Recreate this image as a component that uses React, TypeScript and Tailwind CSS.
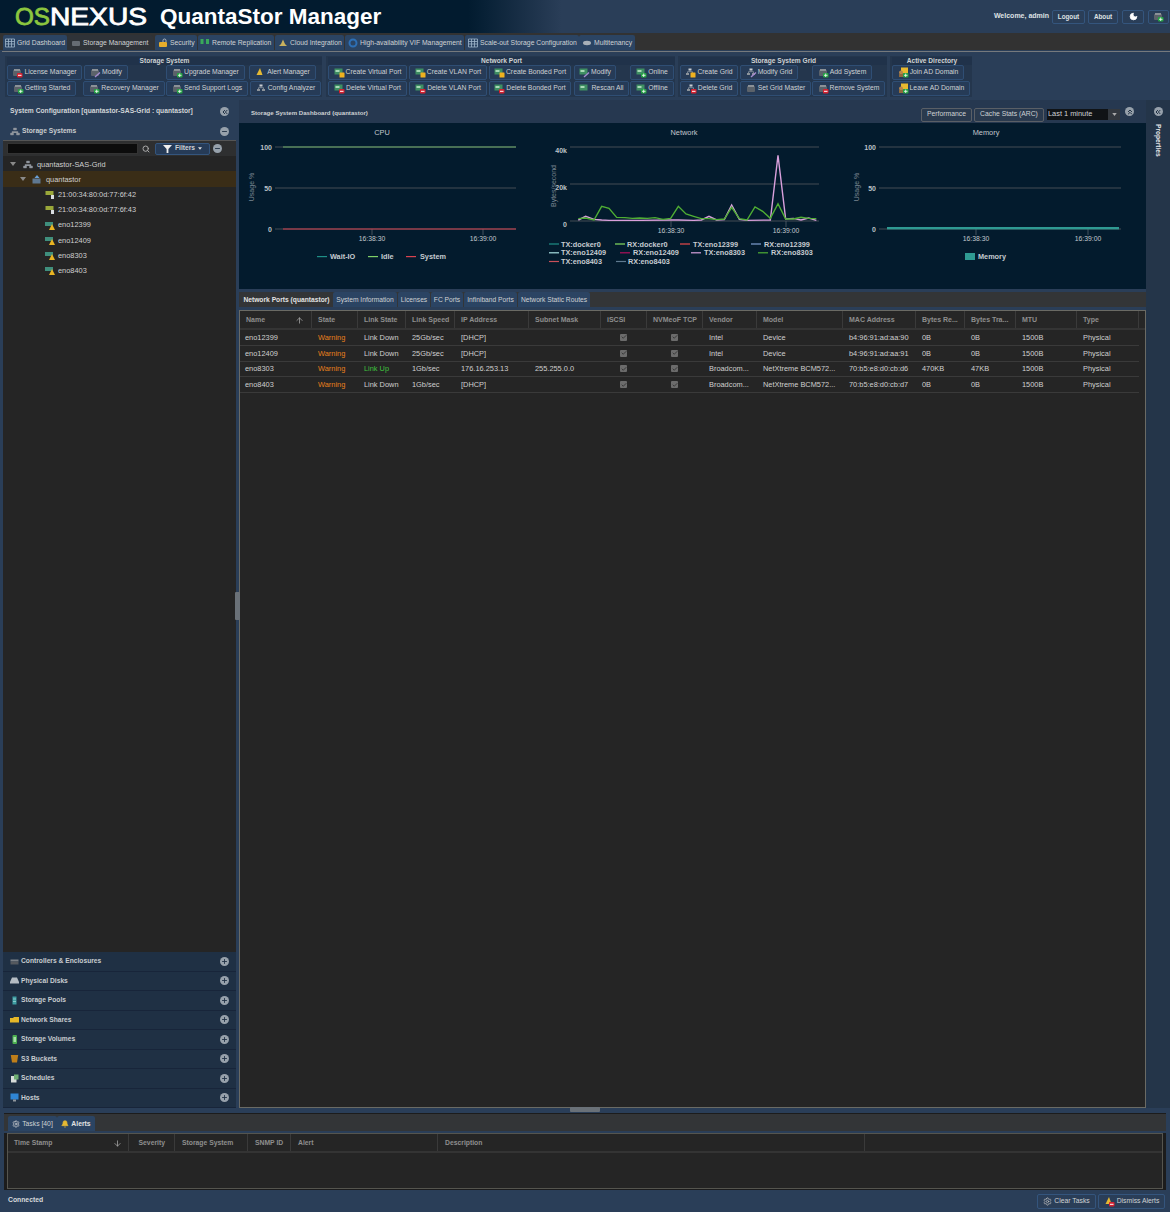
import { ArrowDown, ArrowUp, Bell, Check, ChevronsLeft, ChevronsUp, Minus, Moon, Plus, Search, Settings } from 'lucide-react'
import type { ReactNode } from 'react'

type Base = 'srv' | 'net' | 'tree' | 'ad' | 'bell'
type Badge = 'red' | 'green' | 'yellow' | 'edit' | 'none'

interface Tool {
  label: string
  cls: string
  base: Base
  badge: Badge
}

function ToolIcon({ base, badge }: { base: Base; badge: Badge }) {
  return (
    <svg viewBox="0 0 11 11" className="w-[11px] h-[11px] shrink-0">
      {base === 'srv' && (
        <>
          <rect x="1" y="3" width="8" height="6" rx="1" fill="#5b626a" />
          <rect x="2" y="2" width="6" height="2" fill="#8b9197" />
        </>
      )}
      {base === 'net' && (
        <>
          <rect x="0.5" y="1.5" width="8" height="6" fill="#3f8f63" />
          <rect x="1.5" y="3" width="4" height="2" fill="#a7d9b5" />
        </>
      )}
      {base === 'tree' && (
        <>
          <rect x="3.5" y="1.5" width="3" height="2" fill="#c9ced3" />
          <rect x="1" y="6" width="3" height="2" fill="#8d949b" />
          <rect x="6" y="6" width="3" height="2" fill="#8d949b" />
          <path d="M2.5 6V4.7h5V6M5 3.5v1.2" stroke="#aab0b6" strokeWidth="0.6" fill="none" />
        </>
      )}
      {base === 'ad' && (
        <>
          <rect x="3" y="0.5" width="7" height="6" fill="#e8b92f" />
          <circle cx="3" cy="5.5" r="2" fill="#b8864a" />
          <rect x="1" y="7" width="4" height="3" fill="#8f6a3c" />
        </>
      )}
      {base === 'bell' && <path d="M5 1 7.5 8H1.5Z" fill="#e5b933" />}
      {badge === 'red' && (
        <>
          <rect x="5" y="6" width="5.5" height="4.5" rx="1" fill="#d3202f" />
          <rect x="6" y="7.8" width="3.5" height="1" fill="#fff" />
        </>
      )}
      {badge === 'green' && (
        <>
          <rect x="5" y="6" width="5.5" height="4.5" rx="1" fill="#25a244" />
          <path d="M6 8.3h3.5M7.7 6.6v3.4" stroke="#fff" strokeWidth="0.8" />
        </>
      )}
      {badge === 'yellow' && <rect x="5.5" y="5.5" width="5" height="5" rx="0.5" fill="#efb21f" />}
      {badge === 'edit' && <path d="M5 10 10 5.5" stroke="#a58bd0" strokeWidth="1.4" />}
    </svg>
  )
}

function ToolBtn({ t }: { t: Tool }) {
  return (
    <div className={`h-[15px] shrink-0 flex items-center justify-center gap-[1px] rounded-[2px] border border-[#2f4e74] bg-[#263b57] text-[6.8px] text-[#cfd2d4] whitespace-nowrap ${t.cls}`}>
      <ToolIcon base={t.base} badge={t.badge} />
      <span>{t.label}</span>
    </div>
  )
}

function Group({ title, cls, rows }: { title: string; cls: string; rows: Tool[][] }) {
  return (
    <div className={`h-[41px] shrink-0 bg-[#24364d] pl-[2px] ${cls}`}>
      <div className="h-[8px] mt-[1px] flex items-center justify-center text-[6.6px] font-bold text-[#cfd2d4] bg-[#20324a]">
        {title}
      </div>
      <div className="flex flex-col gap-[1px]">
        {rows.map((r, i) => (
          <div key={i} className="flex">
            {r.map((t) => (
              <ToolBtn key={t.label} t={t} />
            ))}
          </div>
        ))}
      </div>
    </div>
  )
}

const storageRows: Tool[][] = [
  [
    { label: 'License Manager', cls: 'w-[75px]', base: 'srv', badge: 'red' },
    { label: 'Modify', cls: 'w-[44px] ml-[2px]', base: 'srv', badge: 'edit' },
    { label: 'Upgrade Manager', cls: 'w-[79px] ml-[38px]', base: 'srv', badge: 'green' },
    { label: 'Alert Manager', cls: 'w-[67px] ml-[4px]', base: 'bell', badge: 'none' },
  ],
  [
    { label: 'Getting Started', cls: 'w-[69px]', base: 'srv', badge: 'green' },
    { label: 'Recovery Manager', cls: 'w-[82px] ml-[7px]', base: 'srv', badge: 'green' },
    { label: 'Send Support Logs', cls: 'w-[82px] ml-[1px]', base: 'srv', badge: 'green' },
    { label: 'Config Analyzer', cls: 'w-[71px] ml-[2px]', base: 'tree', badge: 'none' },
  ],
]

const networkRows: Tool[][] = [
  [
    { label: 'Create Virtual Port', cls: 'w-[79px]', base: 'net', badge: 'yellow' },
    { label: 'Create VLAN Port', cls: 'w-[78px] ml-[2px]', base: 'net', badge: 'yellow' },
    { label: 'Create Bonded Port', cls: 'w-[82px] ml-[2px]', base: 'net', badge: 'yellow' },
    { label: 'Modify', cls: 'w-[42px] ml-[3px]', base: 'net', badge: 'edit' },
    { label: 'Online', cls: 'w-[44px] ml-[14px]', base: 'net', badge: 'green' },
  ],
  [
    { label: 'Delete Virtual Port', cls: 'w-[79px]', base: 'net', badge: 'red' },
    { label: 'Delete VLAN Port', cls: 'w-[78px] ml-[2px]', base: 'net', badge: 'red' },
    { label: 'Delete Bonded Port', cls: 'w-[82px] ml-[2px]', base: 'net', badge: 'red' },
    { label: 'Rescan All', cls: 'w-[55px] ml-[3px]', base: 'net', badge: 'none' },
    { label: 'Offline', cls: 'w-[44px] ml-[1px]', base: 'net', badge: 'green' },
  ],
]

const gridRows: Tool[][] = [
  [
    { label: 'Create Grid', cls: 'w-[58px]', base: 'tree', badge: 'yellow' },
    { label: 'Modify Grid', cls: 'w-[58px] ml-[2px]', base: 'tree', badge: 'edit' },
    { label: 'Add System', cls: 'w-[60px] ml-[14px]', base: 'srv', badge: 'green' },
  ],
  [
    { label: 'Delete Grid', cls: 'w-[58px]', base: 'tree', badge: 'red' },
    { label: 'Set Grid Master', cls: 'w-[71px] ml-[2px]', base: 'srv', badge: 'none' },
    { label: 'Remove System', cls: 'w-[73px] ml-[1px]', base: 'srv', badge: 'red' },
  ],
]

const adRows: Tool[][] = [
  [{ label: 'Join AD Domain', cls: 'w-[72px]', base: 'ad', badge: 'green' }],
  [{ label: 'Leave AD Domain', cls: 'w-[78px]', base: 'ad', badge: 'green' }],
]

function Round({ children, cls = '' }: { children: ReactNode; cls?: string }) {
  return (
    <span className={`w-[9px] h-[9px] shrink-0 rounded-full bg-[#97a1ab] text-[#1f3044] flex items-center justify-center ${cls}`}>
      {children}
    </span>
  )
}

function TabIcon({ kind }: { kind: string }) {
  return (
    <svg viewBox="0 0 10 10" className="w-[10px] h-[10px] shrink-0">
      {kind === 'grid' && (
        <path d="M.5 1h9v8h-9zM.5 3.5h9M.5 6h9M3.5 1v8M6.5 1v8" fill="none" stroke="#9fb6cc" strokeWidth="0.8" />
      )}
      {kind === 'box' && <rect x="1" y="3" width="8" height="5" rx="1" fill="#666c73" />}
      {kind === 'lock' && (
        <>
          <path d="M5 4V2.5a1.5 1.5 0 0 1 3 0V4" fill="none" stroke="#c9ccce" strokeWidth="0.8" />
          <rect x="1" y="4" width="8" height="5" rx="1" fill="#e4ac2c" />
        </>
      )}
      {kind === 'pair' && (
        <>
          <rect x="0.5" y="1" width="3" height="5" fill="#39a85b" />
          <rect x="6" y="1" width="3" height="5" fill="#39a85b" />
        </>
      )}
      {kind === 'cloud' && <path d="M1 8h8L7 6 5 1.5 3 6Z" fill="#c9b25e" />}
      {kind === 'ring' && <circle cx="5" cy="5" r="3.5" fill="none" stroke="#2d6fb5" strokeWidth="2" />}
      {kind === 'mt' && <ellipse cx="5" cy="5" rx="4" ry="2.2" fill="#a8b0b8" />}
    </svg>
  )
}

const mainTabs = [
  { label: 'Grid Dashboard', cls: 'w-[64px] pl-[2px] bg-[#2b4463]', icon: 'grid' },
  { label: 'Storage Management', cls: 'w-[86px] pl-[4px] bg-[#2f3338]', icon: 'box' },
  { label: 'Security', cls: 'w-[42px] pl-[3px] ml-[2px] bg-[#2b4463]', icon: 'lock' },
  { label: 'Remote Replication', cls: 'w-[76px] pl-[2px] ml-[1px] bg-[#2b4463]', icon: 'pair' },
  { label: 'Cloud Integration', cls: 'w-[69px] pl-[3px] ml-[1px] bg-[#2b4463]', icon: 'cloud' },
  { label: 'High-availability VIF Management', cls: 'w-[119px] pl-[3px] ml-[1px] bg-[#2b4463]', icon: 'ring' },
  { label: 'Scale-out Storage Configuration', cls: 'w-[114px] pl-[3px] ml-[1px] bg-[#2b4463]', icon: 'grid' },
  { label: 'Multitenancy', cls: 'w-[56px] pl-[3px] bg-[#2b4463]', icon: 'mt' },
]

function TreeIcon({ kind }: { kind: 'tree' | 'host' | 'fc' | 'port' }) {
  return (
    <svg viewBox="0 0 10 9" className="w-[10px] h-[9px] shrink-0">
      {kind === 'tree' && (
        <path d="M3.5 1h3v2h-3zM.5 6h3v2h-3zM6.5 6h3v2h-3zM2 6V4.5h6V6" fill="#8f969d" stroke="#8f969d" strokeWidth="0.4" />
      )}
      {kind === 'host' && (
        <>
          <rect x="0.5" y="3.5" width="8" height="5" fill="#5f7891" />
          <path d="M5 0 7.5 3h-5Z" fill="#6aa0d6" />
        </>
      )}
      {kind === 'fc' && (
        <>
          <rect x="0.5" y="1" width="8" height="4" fill="#9aa83a" />
          <rect x="6" y="5" width="3" height="4" fill="#d8dde0" />
        </>
      )}
      {kind === 'port' && (
        <>
          <rect x="0" y="1" width="8" height="4" fill="#3f8f7d" />
          <path d="M7 3 10 9H4Z" fill="#e8b422" />
        </>
      )}
    </svg>
  )
}

const treeLeaves: { label: string; kind: 'fc' | 'port' }[] = [
  { label: '21:00:34:80:0d:77:6f:42', kind: 'fc' },
  { label: '21:00:34:80:0d:77:6f:43', kind: 'fc' },
  { label: 'eno12399', kind: 'port' },
  { label: 'eno12409', kind: 'port' },
  { label: 'eno8303', kind: 'port' },
  { label: 'eno8403', kind: 'port' },
]

function SectionIcon({ kind }: { kind: string }) {
  return (
    <svg viewBox="0 0 9 9" className="w-[9px] h-[9px] mr-[2px] shrink-0">
      {kind === 'ctrl' && (
        <>
          <rect x="0.5" y="2.5" width="8" height="2" fill="#7b8086" />
          <rect x="0.5" y="4.5" width="8" height="3" fill="#55595e" />
        </>
      )}
      {kind === 'disk' && <path d="M2 1.5h5l2 4.5H0ZM0 6h9v1.5H0Z" fill="#b5bcc3" />}
      {kind === 'pool' && (
        <>
          <rect x="2.5" y="0.5" width="4" height="8" fill="#3f9ea3" />
          <path d="M3 3h3M3 5.5h3" stroke="#a9dcdc" strokeWidth="0.7" />
        </>
      )}
      {kind === 'share' && <path d="M0 3h3l1-1h5v5.5H0Z" fill="#e5b728" />}
      {kind === 'vol' && (
        <>
          <rect x="2.5" y="0" width="4.5" height="9" rx="1" fill="#4caf50" />
          <rect x="3.5" y="2" width="2.5" height="5" fill="#a7e0a9" />
        </>
      )}
      {kind === 'bucket' && <path d="M.8 1h7.4L7 8.5H2Z" fill="#c07f1a" />}
      {kind === 'sched' && (
        <>
          <rect x="1" y="2" width="5.5" height="6.5" fill="#d7dcd9" />
          <rect x="4" y="0.5" width="4.5" height="5" fill="#6fae72" />
        </>
      )}
      {kind === 'host' && (
        <>
          <rect x="0.5" y="0.5" width="8" height="6" fill="#2f86d6" />
          <rect x="3" y="6.5" width="3" height="2" fill="#8f969d" />
        </>
      )}
    </svg>
  )
}

const sections = [
  { label: 'Controllers & Enclosures', icon: 'ctrl' },
  { label: 'Physical Disks', icon: 'disk' },
  { label: 'Storage Pools', icon: 'pool' },
  { label: 'Network Shares', icon: 'share' },
  { label: 'Storage Volumes', icon: 'vol' },
  { label: 'S3 Buckets', icon: 'bucket' },
  { label: 'Schedules', icon: 'sched' },
  { label: 'Hosts', icon: 'host' },
]

const columns = [
  { label: 'Name', cls: 'w-[72px]' },
  { label: 'State', cls: 'w-[46px]' },
  { label: 'Link State', cls: 'w-[48px]' },
  { label: 'Link Speed', cls: 'w-[49px]' },
  { label: 'IP Address', cls: 'w-[74px]' },
  { label: 'Subnet Mask', cls: 'w-[72px]' },
  { label: 'iSCSI', cls: 'w-[46px]' },
  { label: 'NVMeoF TCP', cls: 'w-[56px]' },
  { label: 'Vendor', cls: 'w-[54px]' },
  { label: 'Model', cls: 'w-[86px]' },
  { label: 'MAC Address', cls: 'w-[73px]' },
  { label: 'Bytes Re...', cls: 'w-[49px]' },
  { label: 'Bytes Tra...', cls: 'w-[51px]' },
  { label: 'MTU', cls: 'w-[61px]' },
  { label: 'Type', cls: 'w-[62px]' },
]

const ports = [
  ['eno12399', 'Warning', 'Link Down', '25Gb/sec', '[DHCP]', '', '', '', 'Intel', 'Device', 'b4:96:91:ad:aa:90', '0B', '0B', '1500B', 'Physical'],
  ['eno12409', 'Warning', 'Link Down', '25Gb/sec', '[DHCP]', '', '', '', 'Intel', 'Device', 'b4:96:91:ad:aa:91', '0B', '0B', '1500B', 'Physical'],
  ['eno8303', 'Warning', 'Link Up', '1Gb/sec', '176.16.253.13', '255.255.0.0', '', '', 'Broadcom...', 'NetXtreme BCM572...', '70:b5:e8:d0:cb:d6', '470KB', '47KB', '1500B', 'Physical'],
  ['eno8403', 'Warning', 'Link Down', '1Gb/sec', '[DHCP]', '', '', '', 'Broadcom...', 'NetXtreme BCM572...', '70:b5:e8:d0:cb:d7', '0B', '0B', '1500B', 'Physical'],
]

const subTabs = [
  { label: 'Network Ports (quantastor)', cls: 'w-[93px] bg-[#333537] font-bold text-[#e2e2e2]' },
  { label: 'System Information', cls: 'w-[64px] bg-[#2b4463]' },
  { label: 'Licenses', cls: 'w-[32px] ml-[1px] bg-[#2b4463]' },
  { label: 'FC Ports', cls: 'w-[32px] ml-[1px] bg-[#2b4463]' },
  { label: 'Infiniband Ports', cls: 'w-[53px] ml-[1px] bg-[#2b4463]' },
  { label: 'Network Static Routes', cls: 'w-[72px] ml-[1px] bg-[#2b4463]' },
]

const alertCols = [
  { label: 'Time Stamp', cls: 'w-[121px]' },
  { label: 'Severity', cls: 'w-[46px] justify-end pr-[9px]' },
  { label: 'Storage System', cls: 'w-[73px] pl-[7px]' },
  { label: 'SNMP ID', cls: 'w-[43px] pl-[7px]' },
  { label: 'Alert', cls: 'w-[147px] pl-[7px]' },
  { label: 'Description', cls: 'w-[427px] pl-[7px]' },
]

// reference coordinates of the network lines, as read from the picture
const green = [[118, 296], [140, 294], [165, 300], [188, 259], [210, 265], [233, 292], [258, 293], [280, 295], [302, 294], [325, 295], [348, 293], [372, 298], [395, 295], [418, 259], [441, 282], [464, 289], [487, 296], [510, 296], [533, 299], [556, 297], [578, 262], [601, 296], [624, 300], [648, 261], [671, 274], [694, 295], [717, 251], [740, 297], [763, 297], [786, 292], [809, 295], [832, 296]]
const pink = [[118, 300], [140, 289], [165, 298], [188, 300], [210, 301], [233, 301], [302, 301], [395, 300], [418, 300], [464, 301], [487, 300], [510, 289], [533, 300], [556, 299], [578, 255], [601, 298], [624, 301], [694, 300], [717, 106], [740, 297], [763, 295], [786, 300], [809, 294], [832, 301]]
const toPts = (a: number[][]) => a.map(([x, y]) => `${540 + x / 3},${120 + y / 3}`).join(' ')

const svgText = { fontFamily: 'Liberation Sans, sans-serif' }

function Axis({ x1, x2, ys, labels, ticks, title, titleX, yTitle, yTitleX, yTitleY, labelX, labelDy = 0.5 }: {
  x1: number
  x2: number
  ys: number[]
  labels: string[]
  ticks: number[]
  title: string
  titleX: number
  yTitle: string
  yTitleX: number
  yTitleY: number
  labelX: number
  labelDy?: number
}) {
  const base = ys[ys.length - 1]
  return (
    <g style={svgText}>
      <text x={titleX} y="134.5" fontSize="7.4" fill="#c2c8cd" textAnchor="middle">{title}</text>
      {ys.map((y, i) => (
        <g key={y}>
          <line x1={x1} x2={x2} y1={y} y2={y} stroke="#444d55" strokeWidth="1" />
          <text x={labelX} y={y + 2.6 + labelDy} fontSize="7" fontWeight="700" fill="#bdc2c7" textAnchor="end">{labels[i]}</text>
        </g>
      ))}
      {ticks.map((t, i) => (
        <g key={t}>
          <line x1={t} x2={t} y1={base} y2={base + 6} stroke="#566069" strokeWidth="0.8" />
          <text x={t} y={base + 11.5} fontSize="6.8" fill="#c2c8cd" textAnchor="middle">{i === 0 ? '16:38:30' : '16:39:00'}</text>
        </g>
      ))}
      <text transform={`translate(${yTitleX} ${yTitleY}) rotate(-90)`} fontSize="7" fill="#7a8691" textAnchor="middle">{yTitle}</text>
    </g>
  )
}

function LegendItem({ x, y, color, label, gap = 12 }: { x: number; y: number; color: string; label: string; gap?: number }) {
  return (
    <g style={svgText}>
      <line x1={x} x2={x + 10} y1={y} y2={y} stroke={color} strokeWidth="1.2" />
      <text x={x + gap} y={y + 2.6} fontSize="7.3" fontWeight="700" fill="#c6cbd1">{label}</text>
    </g>
  )
}

function Charts() {
  return (
    <div className="h-[166px] flex bg-[#031b2d]">
      <svg viewBox="240 123 301 166" className="w-[301px] h-[166px] shrink-0">
        <Axis x1={276} x2={517} ys={[147, 188, 229]} labels={['100', '50', '0']} ticks={[373, 484]} title="CPU" titleX={383} yTitle="Usage %" yTitleX={255} yTitleY={187} labelX={273} />
        <line x1={284} x2={517} y1={147} y2={147} stroke="#6fae6a" strokeWidth="1.2" />
        <line x1={284} x2={517} y1={229} y2={229} stroke="#d0414f" strokeWidth="1.2" />
        <LegendItem x={318} y={256.6} color="#1f8f86" label="Wait-IO" gap={13} />
        <LegendItem x={369} y={256.6} color="#7fd067" label="Idle" gap={13} />
        <LegendItem x={407} y={256.6} color="#d9434f" label="System" gap={14} />
      </svg>
      <svg viewBox="541 123 301 166" className="w-[301px] h-[166px] shrink-0">
        <Axis x1={571} x2={820} ys={[147, 184, 221]} labels={['40k', '20k', '0']} ticks={[672, 787]} title="Network" titleX={685} yTitle="Bytes/second" yTitleX={557} yTitleY={186} labelX={568} labelDy={3} />
        <polyline points={toPts(pink)} fill="none" stroke="#d9a0dc" strokeWidth="1.4" />
        <polyline points={toPts(green)} fill="none" stroke="#4fae34" strokeWidth="1.4" />
        <LegendItem x={550} y={244} color="#1f8f86" label="TX:docker0" />
        <LegendItem x={616} y={244} color="#86e05f" label="RX:docker0" />
        <LegendItem x={681} y={244} color="#ea4a4a" label="TX:eno12399" gap={13} />
        <LegendItem x={752} y={244} color="#7fa0d0" label="RX:eno12399" gap={13} />
        <LegendItem x={550} y={252.8} color="#a8dfe0" label="TX:eno12409" />
        <LegendItem x={621} y={252.8} color="#b0105a" label="RX:eno12409" gap={13} />
        <LegendItem x={692} y={252.8} color="#d9a0dc" label="TX:eno8303" gap={13} />
        <LegendItem x={759} y={252.8} color="#4fae34" label="RX:eno8303" gap={13} />
        <LegendItem x={550} y={261.5} color="#c9505a" label="TX:eno8403" />
        <LegendItem x={617} y={261.5} color="#5f7a90" label="RX:eno8403" />
      </svg>
      <svg viewBox="842 123 305 166" className="w-[305px] h-[166px] shrink-0">
        <Axis x1={880} x2={1122} ys={[147, 188, 229]} labels={['100', '50', '0']} ticks={[977, 1089]} title="Memory" titleX={987} yTitle="Usage %" yTitleX={860} yTitleY={187} labelX={877} />
        <rect x={888} y={227} width={232} height={2.4} fill="#2f9a92" />
        <rect x={966} y={253} width={10} height={7} fill="#2f9a92" />
        <text x={979} y={259.2} fontSize="7.3" fontWeight="700" fill="#c6cbd1" style={svgText}>Memory</text>
      </svg>
    </div>
  )
}

function Checkbox() {
  return (
    <span className="w-[7px] h-[7px] rounded-[1px] bg-[#6b6b6b] flex items-center justify-center">
      <Check size={6} strokeWidth={3} className="text-[#2a2a2a]" />
    </span>
  )
}

function cellClass(i: number, v: string) {
  if (i === 6 || i === 7) return 'justify-center pr-[1px]'
  if (i === 0) return 'pl-[5px] text-[#d0d0d0]'
  if (i === 1) return 'pl-[6px] text-[#e8801c]'
  if (v === 'Link Up') return 'pl-[6px] text-[#3fc23f]'
  return 'pl-[6px] text-[#d0d0d0]'
}

export default function App() {
  return (
    <div className="w-[1170px] h-[1212px] overflow-hidden relative flex flex-col bg-[#2a3e58] font-['Liberation_Sans',Arial,sans-serif] text-[#cfd2d4]">
      {/* header */}
      <div className="h-[33px] shrink-0 flex items-center bg-gradient-to-r from-[#021b2f] from-40% to-[#2a3e58] to-[48%]">
        <svg viewBox="0 0 150 33" className="w-[150px] h-[33px] shrink-0">
          <text x="15" y="25" fontSize="24.5" fill="#8cc63f" stroke="#8cc63f" strokeWidth="0.8" textLength="35" lengthAdjust="spacingAndGlyphs" fontFamily="Liberation Sans, sans-serif">OS</text>
          <text x="50" y="25" fontSize="24.5" fill="#ffffff" stroke="#ffffff" strokeWidth="0.8" textLength="97" lengthAdjust="spacingAndGlyphs" fontFamily="Liberation Sans, sans-serif">NEXUS</text>
        </svg>
        <span className="ml-[10px] text-[22.5px] font-bold text-white whitespace-nowrap">QuantaStor Manager</span>
        <div className="ml-auto flex items-center text-[6.3px] font-bold text-[#dfe2e4]">
          <span className="mr-[3px] text-[7px]">Welcome, admin</span>
          <div className="w-[33px] h-[14px] flex items-center justify-center border border-[#34557d] rounded-[2px]">Logout</div>
          <div className="w-[30px] h-[14px] ml-[3px] flex items-center justify-center border border-[#34557d] rounded-[2px]">About</div>
          <div className="w-[22px] h-[14px] ml-[4px] flex items-center justify-center border border-[#34557d] rounded-[2px]">
            <Moon size={9} className="text-white" fill="#ffffff" />
          </div>
          <div className="w-[21px] h-[14px] ml-[4px] mr-[1px] flex items-center justify-center border border-[#34557d] rounded-[2px]">
            <ToolIcon base="srv" badge="green" />
          </div>
        </div>
      </div>

      {/* main tabs */}
      <div className="h-[17px] shrink-0 flex items-end pl-[3px] bg-[#323232]">
        {mainTabs.map((t) => (
          <div key={t.label} className={`h-[15px] shrink-0 flex items-center gap-[2px] pt-[1px] rounded-t-[2px] text-[6.8px] text-[#cfd2d4] whitespace-nowrap ${t.cls}`}>
            <TabIcon kind={t.icon} />
            <span>{t.label}</span>
          </div>
        ))}
      </div>

      {/* toolbar */}
      <div className="h-[50px] shrink-0 pt-[1px]">
        <div className="h-[1px] ml-[2px] bg-[#75797d]" />
        <div className="flex pl-[5px] pt-[4px]">
          <Group title="Storage System" cls="w-[317px]" rows={storageRows} />
          <Group title="Network Port" cls="w-[349px] ml-[4px]" rows={networkRows} />
          <Group title="Storage System Grid" cls="w-[209px] ml-[3px]" rows={gridRows} />
          <Group title="Active Directory" cls="w-[82px] ml-[3px]" rows={adRows} />
        </div>
      </div>

      {/* body */}
      <div className="h-[1010px] shrink-0 flex relative pb-[2px]">
        {/* left panel */}
        <div className="w-[239px] shrink-0 flex flex-col pl-[3px] pr-[3px]">
          <div className="h-[23px] shrink-0 flex items-center pl-[7px] pr-[7px] text-[6.7px] font-bold text-[#d2d5d7] justify-between">
            <span>System Configuration [quantastor-SAS-Grid : quantastor]</span>
            <Round><ChevronsLeft size={8} strokeWidth={3} /></Round>
          </div>
          <div className="h-[17px] shrink-0 flex items-center pl-[7px] pr-[7px] text-[6.7px] font-bold text-[#c9ccce] gap-[2px]">
            <TreeIcon kind="tree" />
            <span>Storage Systems</span>
            <Round cls="ml-auto"><Minus size={7} strokeWidth={3} /></Round>
          </div>
          <div className="h-[16px] shrink-0 flex items-center bg-[#2e2f30] border-t border-[#555] pl-[4px]">
            <div className="w-[131px] h-[11px] bg-[#0c0c0c] border border-[#333]" />
            <Search size={8} className="ml-[4px] text-[#aaa]" strokeWidth={3} />
            <div className="w-[55px] h-[12px] ml-[5px] flex items-center justify-center gap-[3px] rounded-[2px] border border-[#34557d] bg-[#263b57] text-[6.7px] font-bold">
              <svg viewBox="0 0 10 10" className="w-[9px] h-[9px]"><path d="M0 1h10L6 5.5V10H4V5.5Z" fill="#eee" /></svg>
              <span>Filters</span>
              <svg viewBox="0 0 6 4" className="w-[4px] h-[3px]"><path d="M0 0h6L3 4Z" fill="#ddd" /></svg>
            </div>
            <Round cls="ml-[3px]"><Minus size={7} strokeWidth={3} /></Round>
          </div>
          <div className="flex-1 bg-[#252525] text-[7.4px] text-[#d0d0d0]">
            <div className="h-[15.4px] flex items-center pl-[7px] pt-[1px]">
              <svg viewBox="0 0 6 4" className="w-[6px] h-[4px]"><path d="M0 0h6L3 4Z" fill="#8a8a8a" /></svg>
              <span className="ml-[7px]"><TreeIcon kind="tree" /></span>
              <span className="ml-[4px]">quantastor-SAS-Grid</span>
            </div>
            <div className="h-[15.4px] flex items-center pl-[17px] bg-[#3a2d17]">
              <svg viewBox="0 0 6 4" className="w-[6px] h-[4px]"><path d="M0 0h6L3 4Z" fill="#8a8a8a" /></svg>
              <span className="ml-[6px]"><TreeIcon kind="host" /></span>
              <span className="ml-[4px]">quantastor</span>
            </div>
            {treeLeaves.map((l) => (
              <div key={l.label} className="h-[15.3px] flex items-center pl-[42px] gap-[3px]">
                <TreeIcon kind={l.kind} />
                <span>{l.label}</span>
              </div>
            ))}
          </div>
          <div className="shrink-0">
            {sections.map((s) => (
              <div key={s.label} className="h-[19.5px] flex items-center pl-[7px] pr-[7px] bg-[#1f3044] border-b border-[#18253a] text-[6.7px] font-bold text-[#c8cdd0]">
                <SectionIcon kind={s.icon} />
                <span>{s.label}</span>
                <Round cls="ml-auto"><Plus size={7} strokeWidth={3} /></Round>
              </div>
            ))}
          </div>
        </div>

        {/* center panel */}
        <div className="w-[907px] shrink-0 flex flex-col">
          <div className="h-[23px] shrink-0 flex items-center pl-[12px] bg-[#263850] text-[6.8px] text-[#cfd2d4]">
            <span className="mt-[2px] text-[6.1px] font-bold">Storage System Dashboard (quantastor)</span>
            <div className="ml-auto w-[51px] h-[14px] mt-[6px] flex items-center justify-center border border-[#5a5f66] rounded-[2px] bg-[#2a3a4e]">Performance</div>
            <div className="ml-[2px] w-[70px] h-[14px] mt-[6px] flex items-center justify-center border border-[#5a5f66] rounded-[2px] bg-[#2a3a4e]">Cache Stats (ARC)</div>
            <div className="ml-[3px] w-[73px] h-[11px] mt-[5px] flex items-center bg-[#101316] text-[7.4px]">
              <span className="pl-[1px] flex-1">Last 1 minute</span>
              <span className="w-[12px] h-full bg-[#33383e] flex items-center justify-center">
                <svg viewBox="0 0 6 4" className="w-[5px] h-[3px]"><path d="M0 0h6L3 4Z" fill="#aaa" /></svg>
              </span>
            </div>
            <Round cls="ml-[5px] mr-[12px]"><ChevronsUp size={8} strokeWidth={3} /></Round>
          </div>
          <Charts />
          <div className="h-[3px] shrink-0" />
          <div className="h-[15px] shrink-0 flex pl-[1px] bg-[#333537]">
            {subTabs.map((t) => (
              <div key={t.label} className={`h-[15px] shrink-0 flex items-center justify-center pt-[2px] rounded-t-[2px] text-[6.7px] whitespace-nowrap ${t.cls}`}>
                {t.label}
              </div>
            ))}
          </div>
          <div className="h-[3px] shrink-0 bg-[#2a3e58]" />
          <div className="flex-1 bg-[#252525] border border-[#6a6a64] flex flex-col">
            <div className="h-[19px] shrink-0 flex bg-[#262626] border-b-2 border-[#343434]">
              {columns.map((c) => (
                <div key={c.label} className={`shrink-0 h-full flex items-center justify-between pt-[2px] px-[6px] border-r border-[#3a3a3a] text-[7px] font-bold text-[#8e8e8e] whitespace-nowrap ${c.cls}`}>
                  <span>{c.label}</span>
                  {c.label === 'Name' && <ArrowUp size={9} className="text-[#aaa] mr-[1px]" />}
                </div>
              ))}
            </div>
            {ports.map((row) => (
              <div key={row[0]} className="h-[15.8px] shrink-0 flex w-[899px] border-b border-[#3a3a3a]">
                {row.map((v, i) => (
                  <div key={i} className={`shrink-0 h-full flex items-center text-[7.4px] whitespace-nowrap overflow-hidden ${columns[i].cls} ${cellClass(i, v)}`}>
                    {i === 6 || i === 7 ? <Checkbox /> : v}
                  </div>
                ))}
              </div>
            ))}
          </div>
        </div>

        {/* properties rail */}
        <div className="w-[24px] shrink-0 flex flex-col items-center pt-[7px] bg-[#243549]">
          <Round><ChevronsLeft size={8} strokeWidth={3} /></Round>
          <span className="mt-[8px] text-[6.6px] font-bold text-[#e4e6e8] [writing-mode:vertical-rl]">Properties</span>
        </div>

        {/* splitter handles */}
        <div className="absolute left-[235px] top-[492px] w-[5px] h-[28px] rounded-[1px] bg-[#6a7178]" />
        <div className="absolute left-[570px] bottom-[-2px] w-[30px] h-[5px] rounded-[1px] bg-[#6a7178]" />
      </div>

      {/* alerts panel */}
      <div className="h-[3px] shrink-0" />
      <div className="h-[77px] shrink-0 mx-[4px] flex flex-col bg-[#1c1c1c] pt-[1px]">
        <div className="h-[17px] shrink-0 flex items-end pl-[4px] bg-[#333537]">
          <div className="w-[49px] h-[15px] flex items-center justify-center gap-[2px] pt-[1px] rounded-t-[2px] bg-[#2b4463] text-[6.8px]">
            <Settings size={8} className="text-[#ddd]" />
            <span>Tasks [40]</span>
          </div>
          <div className="w-[38px] h-[15px] flex items-center justify-center gap-[2px] pt-[1px] rounded-t-[2px] bg-[#2b4463] text-[6.8px] font-bold text-[#e2e2e2]">
            <Bell size={8} className="text-[#e5b933]" fill="#e5b933" />
            <span>Alerts</span>
          </div>
        </div>
        <div className="h-[2px] shrink-0 bg-[#2a3e58]" />
        <div className="flex-1 mx-[3px] mb-[1px] bg-[#252525] border border-[#55554f] flex flex-col">
          <div className="h-[19px] shrink-0 flex border-b-2 border-[#343434]">
            {alertCols.map((c) => (
              <div key={c.label} className={`shrink-0 h-full flex items-center pt-[2px] border-r border-[#3a3a3a] text-[6.8px] font-bold text-[#8e8e8e] ${c.cls}`}>
                {c.label === 'Time Stamp' ? (
                  <span className="flex-1 flex items-center justify-between pl-[6px] pr-[6px]">
                    <span>{c.label}</span>
                    <ArrowDown size={9} className="text-[#aaa]" />
                  </span>
                ) : (
                  c.label
                )}
              </div>
            ))}
          </div>
        </div>
      </div>

      {/* status bar */}
      <div className="flex-1 flex items-center pl-[8px] pr-[5px] text-[6.8px] text-[#d8dadc]">
        <span className="mb-[2px] font-bold">Connected</span>
        <div className="ml-auto w-[59px] h-[15px] flex items-center justify-center gap-[2px] border border-[#34557d] rounded-[2px] text-[#cfd2d4]">
          <Settings size={9} className="text-[#bbb]" />
          <span>Clear Tasks</span>
        </div>
        <div className="ml-[2px] w-[67px] h-[15px] flex items-center justify-center gap-[2px] border border-[#34557d] rounded-[2px] text-[#cfd2d4]">
          <ToolIcon base="bell" badge="red" />
          <span>Dismiss Alerts</span>
        </div>
      </div>
    </div>
  )
}
